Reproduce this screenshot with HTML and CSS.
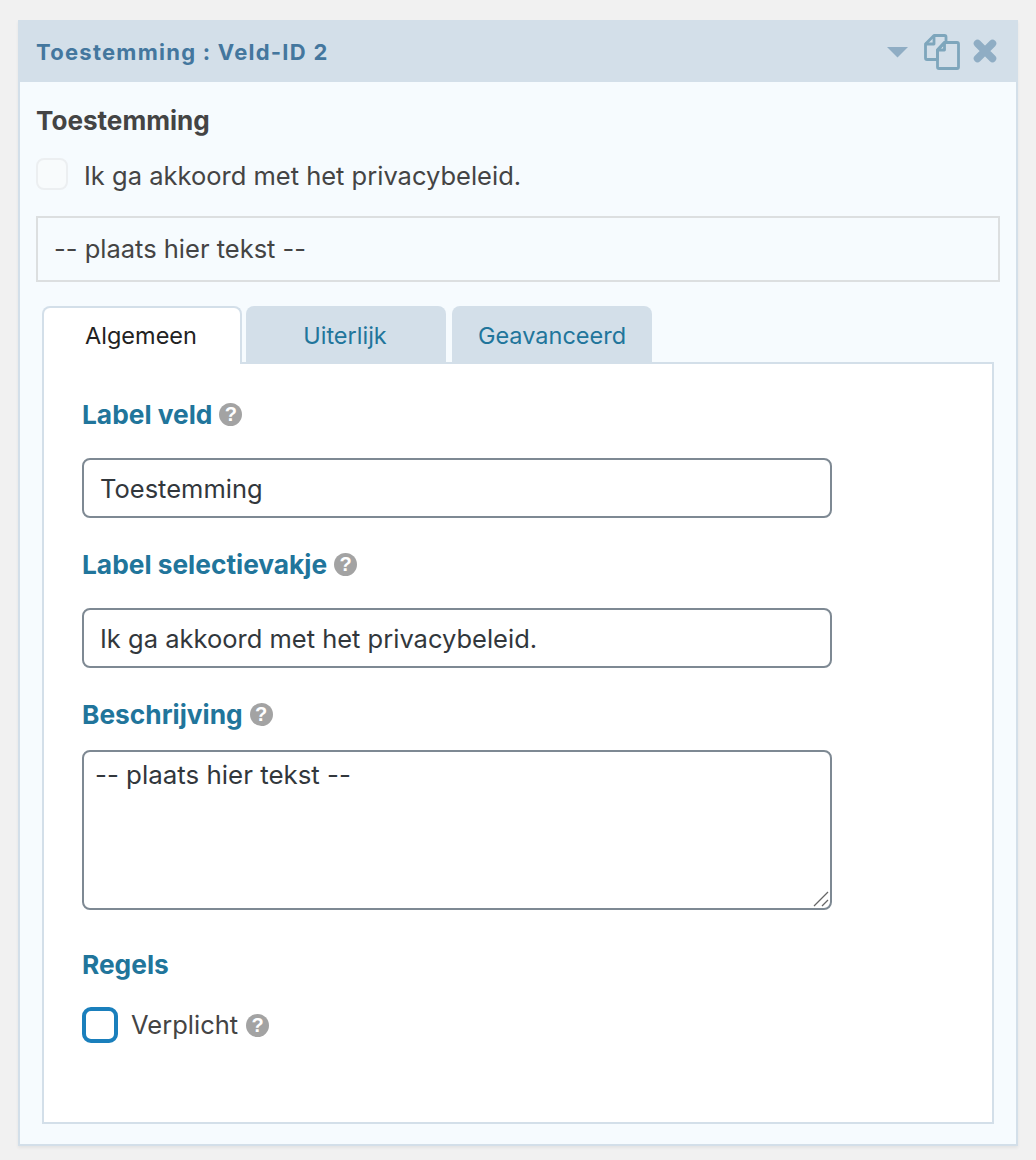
FILE: index.html
```html
<!DOCTYPE html>
<html lang="en">
<head>
    <meta charset="UTF-8">
    <title>Toestemming</title>
    <link rel="stylesheet" href="styles.css">
</head>
<body>
    <div class="field-panel">
        <header class="panel-head">
            <span class="panel-title">Toestemming : Veld-ID 2</span>
            <div class="panel-actions">
                <svg class="icon-caret" width="22" height="12" viewBox="0 0 22 12"><path d="M0 1h21L10.500 11.500z" fill="#8fadc4"/></svg>
                <svg class="icon-copy" width="36" height="36" viewBox="0 0 36 36" fill="none" stroke="#7ea6bc" stroke-width="2.800" stroke-linejoin="round">
                    <path d="M10 1.500h10.500a1.500 1.500 0 0 1 1.500 1.500v5.500H20.500l-7 7.500v9.500H3a1.500 1.500 0 0 1-1.500-1.500V10z"/>
                    <path d="M10 1.500V10H1.500"/>
                    <path d="M20.500 8.500h12.500a1.500 1.500 0 0 1 1.500 1.500v23a1.500 1.500 0 0 1-1.500 1.500H15a1.500 1.500 0 0 1-1.500-1.500V16z"/>
                    <path d="M20.500 8.500V16h-7"/>
                </svg>
                <svg class="icon-close" width="26" height="26" viewBox="0 0 26 26"><path d="M5.500 5.500l15 15M20.500 5.500l-15 15" fill="none" stroke="#8fadc4" stroke-width="7.500" stroke-linecap="round"/></svg>
            </div>
        </header>

        <div class="panel-body">
            <h3 class="preview-title">Toestemming</h3>
            <label class="preview-check">
                <span class="preview-box"></span>
                Ik ga akkoord met het privacybeleid.
            </label>
            <div class="preview-desc">-- plaats hier tekst --</div>

            <nav class="tabs">
                <a href="#" class="tab active">Algemeen</a>
                <a href="#" class="tab">Uiterlijk</a>
                <a href="#" class="tab">Geavanceerd</a>
            </nav>

            <div class="tab-pane">
                <div class="setting">
                    <label class="setting-label">Label veld <span class="help">?</span></label>
                    <input type="text" class="text-input" value="Toestemming">
                </div>
                <div class="setting">
                    <label class="setting-label">Label selectievakje <span class="help">?</span></label>
                    <input type="text" class="text-input" value="Ik ga akkoord met het privacybeleid.">
                </div>
                <div class="setting">
                    <label class="setting-label tight">Beschrijving <span class="help">?</span></label>
                    <div class="area-wrap">
                        <textarea class="text-area">-- plaats hier tekst --</textarea>
                        <svg class="resizer" width="16" height="16" viewBox="0 0 16 16" stroke="#666" stroke-width="1.300" fill="none"><path d="M1 15L15 1M9 15l6-6"/></svg>
                    </div>
                </div>
                <div class="setting rules">
                    <label class="setting-label">Regels</label>
                    <label class="rule-check">
                        <span class="rule-box"></span>
                        Verplicht <span class="help">?</span>
                    </label>
                </div>
            </div>
        </div>
    </div>
</body>
</html>
```

FILE: styles.css
```css
* {
    box-sizing: border-box;
}

body {
    margin: 0;
    padding: 20px 18px 0;
    height: 1160px;
    overflow: hidden;
    background-color: #f1f1f1;
    font-family: "Inter", "Liberation Sans", sans-serif;
    font-size: 25.500px;
    color: #444;
}

.field-panel {
    width: 1000px;
    height: 1126px;
    background-color: #f6fbfe;
    border: 2px solid #d3dfe9;
    border-top: none;
    box-shadow: 0 2px 3px rgba(0, 0, 0, 0.06);
}

.panel-head {
    display: flex;
    align-items: center;
    justify-content: space-between;
    height: 62px;
    padding: 0 18px 0 16px;
    background-color: #d3dfe9;
}

.panel-title {
    padding-top: 2px;
    font-size: 22px;
    font-weight: 700;
    letter-spacing: 1.250px;
    color: #44779e;
}

.panel-actions {
    display: flex;
    align-items: center;
}

.icon-caret {
    margin-right: 15px;
    margin-top: 2px;
}

.icon-copy {
    margin-right: 12px;
    margin-top: 2px;
}

.panel-body {
    padding: 0 16px;
}

.preview-title {
    margin: 0;
    padding-top: 23px;
    font-size: 26.100px;
    line-height: 32px;
    font-weight: 700;
    color: #444;
}

.preview-check {
    display: flex;
    align-items: flex-start;
    gap: 16px;
    margin-top: 21px;
    line-height: 36px;
}

.preview-box {
    width: 32px;
    height: 32px;
    border: 2px solid #eceff1;
    border-radius: 8px;
    background-color: #f8fbfc;
}

.preview-desc {
    height: 66px;
    margin-top: 22px;
    padding-left: 16px;
    border: 2px solid #dcdfe0;
    line-height: 62px;
}

.tabs {
    display: flex;
    gap: 4px;
    margin: 24px 6px 0;
}

.tab {
    width: 200px;
    height: 56px;
    padding-right: 2px;
    border-radius: 8px 8px 0 0;
    background-color: #d3dfe9;
    color: #21759b;
    font-size: 23.500px;
    line-height: 60px;
    text-align: center;
    text-decoration: none;
}

.tab + .tab + .tab {
    margin-left: 2px;
    padding-right: 0;
}

.tab.active {
    position: relative;
    z-index: 1;
    height: 58px;
    border: 2px solid #d3dfe9;
    border-bottom: none;
    background-color: #fff;
    color: #222;
    line-height: 56px;
}

.tab-pane {
    height: 762px;
    margin: -2px 6px 0;
    padding: 33px 38px 0;
    background-color: #fff;
    border: 2px solid #d3dfe9;
}

.setting {
    margin-bottom: 29px;
}

.setting-label {
    display: flex;
    align-items: center;
    gap: 7px;
    height: 36px;
    margin-bottom: 25px;
    padding-bottom: 2px;
    font-size: 26.300px;
    font-weight: 700;
    color: #21759b;
}

.setting-label.tight {
    margin-bottom: 17px;
}

.help {
    display: inline-block;
    width: 23px;
    height: 23px;
    border-radius: 50%;
    background-color: #a3a3a3;
    color: #fff;
    font-family: "Liberation Sans", sans-serif;
    font-size: 20px;
    font-weight: 700;
    line-height: 23px;
    text-align: center;
}

.text-input,
.text-area {
    display: block;
    width: 750px;
    border: 2px solid #7e8993;
    border-radius: 8px;
    background-color: #fff;
    color: #32373c;
    font-family: "Inter", "Liberation Sans", sans-serif;
    font-size: 25.500px;
}

.text-input {
    height: 60px;
    padding: 0 16px;
}

.area-wrap {
    position: relative;
    width: 750px;
}

.text-area {
    height: 160px;
    padding: 7px 11px;
    font-size: 25.900px;
    line-height: 32px;
    resize: none;
}

.resizer {
    position: absolute;
    right: 3px;
    bottom: 3px;
}

.rules {
    padding-top: 8px;
}

.rules .setting-label {
    margin-bottom: 24px;
}

.rule-check {
    display: flex;
    align-items: center;
    color: #444;
    line-height: 36px;
}

.rule-box {
    width: 36px;
    height: 36px;
    margin-right: 13px;
    border: 4px solid #1a7fbc;
    border-radius: 9px;
}

.rule-check .help {
    margin-left: 8px;
}
```
